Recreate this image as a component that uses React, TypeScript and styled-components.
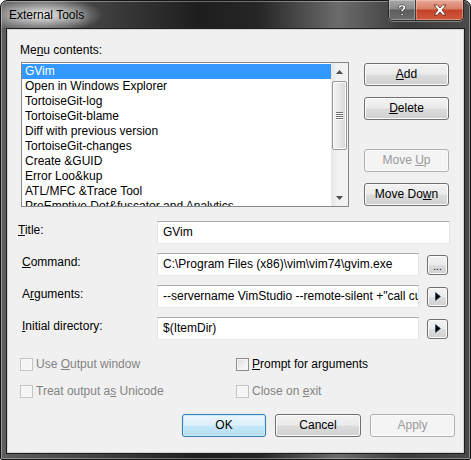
import React from "react";
import styled, { createGlobalStyle, css } from "styled-components";

const Global = createGlobalStyle`
  html, body { margin: 0; padding: 0; background: #ffffff; }
  body { font-family: "Liberation Sans", Arial, sans-serif; font-size: 12px; }
  * { box-sizing: border-box; }
`;

const FONT = `"Liberation Sans", Arial, sans-serif`;

const Window = styled.div`
  width: 471px;
  height: 460px;
  display: flex;
  flex-direction: column;
  padding: 0 6px 6px 6px;
  border: 1px solid #141414;
  border-radius: 7px 7px 2px 2px;
  background:
    radial-gradient(ellipse 60px 18px at 42px 14px, rgba(235, 235, 235, 0.95), rgba(235, 235, 235, 0) 100%),
    linear-gradient(90deg, #5e5e5e 0%, #4a4a4a 15%, #1e1e1e 42%, #262626 55%, #6c6c6c 72%, #3c3c3c 86%, #4a4a4a 100%);
  box-shadow: inset 0 0 0 1px rgba(255, 255, 255, 0.35);
  font-family: ${FONT};
  font-size: 12px;
`;

const TitleBar = styled.div`
  height: 28px;
  display: flex;
  align-items: flex-start;
  justify-content: space-between;
`;

const TitleText = styled.span`
  padding: 7px 0 0 2px;
  color: #000;
  line-height: 15px;
  text-shadow: 0 0 8px rgba(255, 255, 255, 0.9);
`;

const CaptionGroup = styled.div`
  display: flex;
  margin-top: -1px;
  border: 1px solid #2a2a2a;
  border-top: none;
  border-radius: 0 0 5px 5px;
  overflow: hidden;
  box-shadow: 0 1px 0 rgba(255, 255, 255, 0.35);
`;

const CaptionButton = styled.div<{ $kind: "help" | "close" }>`
  height: 20px;
  display: flex;
  align-items: center;
  justify-content: center;
  ${(p) =>
    p.$kind === "help"
      ? css`
          width: 27px;
          background: linear-gradient(#a7a7a7 0%, #8a8a8a 45%, #5c5c5c 50%, #6e6e6e 100%);
          border-right: 1px solid #3a3a3a;
          box-shadow: inset 0 0 0 1px rgba(255, 255, 255, 0.3);
        `
      : css`
          width: 47px;
          background: linear-gradient(#e8a897 0%, #d97e66 45%, #c2412a 50%, #d05a3c 100%);
          box-shadow: inset 0 0 0 1px rgba(255, 220, 210, 0.4);
        `}
`;

const Client = styled.div`
  flex: 1;
  background: #f0f0f0;
  border: 1px solid #d4d4d4;
  box-shadow: 0 0 0 1px #1c1c1c;
  display: flex;
  flex-direction: column;
  padding-top: 13px;
  color: #000;
`;

const SectionLabel = styled.div`
  line-height: 15px;
  padding-left: 12px;
  margin-bottom: 4px;
`;

const TopRow = styled.div`
  display: flex;
  padding-left: 13px;
  gap: 15px;
`;

const ListBox = styled.div`
  width: 328px;
  height: 145px;
  border: 1px solid #828790;
  background: #fff;
  display: flex;
  overflow: hidden;
`;

const ListItems = styled.div`
  flex: 1;
  padding-top: 1px;
  overflow: hidden;
`;

const ListItem = styled.div<{ $selected?: boolean }>`
  height: 15px;
  line-height: 15px;
  padding-left: 3px;
  white-space: nowrap;
  ${(p) =>
    p.$selected &&
    css`
      background: #3399ff;
      color: #fff;
    `}
`;

const ScrollBar = styled.div`
  width: 17px;
  display: flex;
  flex-direction: column;
  background: linear-gradient(90deg, #e6e6e6, #f2f2f2 40%, #f2f2f2);
`;

const ScrollArrow = styled.div`
  height: 17px;
  display: flex;
  align-items: center;
  justify-content: center;
`;

const ScrollTrack = styled.div`
  flex: 1;
  padding: 1px 1px 0 1px;
`;

const ScrollThumb = styled.div`
  height: 69px;
  border: 1px solid #979797;
  border-radius: 2px;
  background: linear-gradient(90deg, #f4f4f4 0%, #e8e8e8 50%, #d6d6d6 100%);
  box-shadow: inset 0 0 0 1px #fbfbfb;
  display: flex;
  flex-direction: column;
  align-items: center;
  justify-content: center;
  gap: 1px;
`;

const Grip = styled.div`
  width: 7px;
  height: 1px;
  background: #6e6e6e;
  box-shadow: 0 1px 0 #ffffff;
`;

const ButtonColumn = styled.div`
  display: flex;
  flex-direction: column;
  width: 85px;
  padding-top: 1px;
`;

type BtnVariant = "normal" | "default" | "disabled";

const Button = styled.button<{ $variant?: BtnVariant; $gap?: number; $w?: number }>`
  width: ${(p) => p.$w ?? 85}px;
  height: 23px;
  margin: ${(p) => p.$gap ?? 0}px 0 0 0;
  padding: 0;
  font-family: ${FONT};
  font-size: 12px;
  line-height: 15px;
  color: #000;
  border-radius: 3px;
  border: 1px solid #707070;
  background: linear-gradient(#f2f2f2 0%, #ebebeb 48%, #dddddd 52%, #cfcfcf 100%);
  box-shadow: inset 0 0 0 1px #fcfcfc;
  ${(p) =>
    p.$variant === "default" &&
    css`
      border-color: #3c7fb1;
      background: linear-gradient(#e9f5fc 0%, #dcf0fb 48%, #c6e7f8 52%, #b4dcf1 100%);
      box-shadow: inset 0 0 0 1px #c4ecfd, 0 0 1px #7fc4ee;
    `}
  ${(p) =>
    p.$variant === "disabled" &&
    css`
      border-color: #adb2b5;
      background: #f4f4f4;
      color: #9a9a9a;
      box-shadow: inset 0 0 0 1px #fafafa;
    `}
`;

const Fields = styled.div`
  margin-top: 14px;
  padding-left: 10px;
  display: flex;
  flex-direction: column;
  gap: 9px;
`;

const FieldRow = styled.div`
  display: flex;
  align-items: center;
  height: 23px;
`;

const FieldLabel = styled.label<{ $indent?: number }>`
  width: 139px;
  padding-left: ${(p) => p.$indent ?? 0}px;
  line-height: 15px;
  margin-top: -4px;
`;

const TextBox = styled.div<{ $w: number }>`
  width: ${(p) => p.$w}px;
  height: 23px;
  background: #fff;
  border: 1px solid #e2e3ea;
  border-top-color: #abadb3;
  border-bottom-color: #e3e9ef;
  padding: 0 3px 0 5px;
  line-height: 21px;
  white-space: nowrap;
  overflow: hidden;
`;

const SmallButton = styled.div`
  width: 21px;
  height: 20px;
  margin-left: 8px;
  border: 1px solid #707070;
  border-radius: 3px;
  background: linear-gradient(#f2f2f2 0%, #ebebeb 48%, #dddddd 52%, #cfcfcf 100%);
  box-shadow: inset 0 0 0 1px #fcfcfc;
  display: flex;
  align-items: center;
  justify-content: center;
`;

const Dots = styled.span`
  font-size: 10px;
  line-height: 10px;
  margin-top: 4px;
  letter-spacing: 0;
  color: #000;
`;

const Checks = styled.div`
  margin-top: 18px;
  padding-left: 12px;
  display: grid;
  grid-template-columns: 216px 1fr;
  grid-auto-rows: 13px;
  row-gap: 14px;
`;

const CheckItem = styled.div<{ $disabled?: boolean }>`
  display: flex;
  align-items: center;
  gap: 3px;
  color: ${(p) => (p.$disabled ? "#838383" : "#000")};
  line-height: 15px;
  white-space: nowrap;
`;

const CheckBox = styled.span<{ $disabled?: boolean }>`
  width: 13px;
  height: 13px;
  flex: none;
  border: 1px solid ${(p) => (p.$disabled ? "#c4c4c4" : "#8e8f8f")};
  background: ${(p) =>
    p.$disabled ? "#f4f4f4" : "linear-gradient(135deg, #dcdcdc 0%, #f2f2f2 60%, #ffffff 100%)"};
  box-shadow: inset 0 0 0 1px ${(p) => (p.$disabled ? "#f8f8f8" : "#f4f4f4")};
`;

const Footer = styled.div`
  margin-top: 16px;
  padding-right: 8px;
  display: flex;
  justify-content: flex-end;
  gap: 9px;
`;

const U = styled.u`
  text-decoration: underline;
  text-underline-offset: 1px;
`;

const items = [
  "GVim",
  "Open in Windows Explorer",
  "TortoiseGit-log",
  "TortoiseGit-blame",
  "Diff with previous version",
  "TortoiseGit-changes",
  "Create &GUID",
  "Error Loo&kup",
  "ATL/MFC &Trace Tool",
  "PreEmptive Dot&fuscator and Analytics",
];

const Arrow = ({ dir }: { dir: "up" | "down" }) => (
  <svg width="7" height="4" viewBox="0 0 7 4">
    {dir === "up" ? (
      <polygon points="3.5,0 7,4 0,4" fill="#505050" />
    ) : (
      <polygon points="0,0 7,0 3.5,4" fill="#505050" />
    )}
  </svg>
);

const PlayIcon = () => (
  <svg width="6" height="9" viewBox="0 0 6 9">
    <polygon points="0.5,0.5 5.5,4.5 0.5,8.5" fill="#000" stroke="#1a3a6a" strokeWidth="0.6" />
  </svg>
);

const HelpGlyph = () => (
  <svg width="10" height="13" viewBox="0 0 10 13">
    <path
      d="M1.3 4 C1.3 1.6 3 0.8 5 0.8 C7.2 0.8 8.6 2 8.6 3.6 C8.6 5.6 6.1 5.8 6.1 7.8 L3.9 7.8 C3.9 5.2 6.2 4.9 6.2 3.7 C6.2 3 5.7 2.6 5 2.6 C4.2 2.6 3.7 3.1 3.7 4 Z"
      fill="#fff"
      stroke="#333"
      strokeWidth="0.7"
    />
    <rect x="3.9" y="9.3" width="2.3" height="2.3" fill="#fff" stroke="#333" strokeWidth="0.7" />
  </svg>
);

const CloseGlyph = () => (
  <svg width="14" height="12" viewBox="0 0 14 12">
    <path
      d="M1 1 L4.5 1 L7 4 L9.5 1 L13 1 L9 6 L13 11 L9.5 11 L7 8 L4.5 11 L1 11 L5 6 Z"
      fill="#fff"
      stroke="#5a1e12"
      strokeWidth="0.8"
      strokeLinejoin="round"
    />
  </svg>
);

export default function App() {
  return (
    <>
      <Global />
      <Window>
        <TitleBar>
          <TitleText>External Tools</TitleText>
          <CaptionGroup>
            <CaptionButton $kind="help">
              <HelpGlyph />
            </CaptionButton>
            <CaptionButton $kind="close">
              <CloseGlyph />
            </CaptionButton>
          </CaptionGroup>
        </TitleBar>
        <Client>
          <SectionLabel>
            Me<U>n</U>u contents:
          </SectionLabel>
          <TopRow>
            <ListBox>
              <ListItems>
                {items.map((t, i) => (
                  <ListItem key={t} $selected={i === 0}>
                    {t}
                  </ListItem>
                ))}
              </ListItems>
              <ScrollBar>
                <ScrollArrow>
                  <Arrow dir="up" />
                </ScrollArrow>
                <ScrollTrack>
                  <ScrollThumb>
                    <Grip />
                    <Grip />
                    <Grip />
                    <Grip />
                  </ScrollThumb>
                </ScrollTrack>
                <ScrollArrow>
                  <Arrow dir="down" />
                </ScrollArrow>
              </ScrollBar>
            </ListBox>
            <ButtonColumn>
              <Button>
                <U>A</U>dd
              </Button>
              <Button $gap={11}>
                <U>D</U>elete
              </Button>
              <Button $gap={29} $variant="disabled">
                Move <U>U</U>p
              </Button>
              <Button $gap={11}>
                Move Do<U>w</U>n
              </Button>
            </ButtonColumn>
          </TopRow>
          <Fields>
            <FieldRow>
              <FieldLabel>
                <U>T</U>itle:
              </FieldLabel>
              <TextBox $w={293}>GVim</TextBox>
            </FieldRow>
            <FieldRow>
              <FieldLabel $indent={4}>
                <U>C</U>ommand:
              </FieldLabel>
              <TextBox $w={262}>C:\Program Files (x86)\vim\vim74\gvim.exe</TextBox>
              <SmallButton>
                <Dots>...</Dots>
              </SmallButton>
            </FieldRow>
            <FieldRow>
              <FieldLabel $indent={4}>
                A<U>r</U>guments:
              </FieldLabel>
              <TextBox $w={262}>
                --servername VimStudio --remote-silent +"call cursor($(CurLine), $(CurCol))" $(ItemFileName)$(ItemExt)
              </TextBox>
              <SmallButton>
                <PlayIcon />
              </SmallButton>
            </FieldRow>
            <FieldRow>
              <FieldLabel $indent={4}>
                <U>I</U>nitial directory:
              </FieldLabel>
              <TextBox $w={262}>$(ItemDir)</TextBox>
              <SmallButton>
                <PlayIcon />
              </SmallButton>
            </FieldRow>
          </Fields>
          <Checks>
            <CheckItem $disabled>
              <CheckBox $disabled />
              <span>
                Use <U>O</U>utput window
              </span>
            </CheckItem>
            <CheckItem>
              <CheckBox />
              <span>
                <U>P</U>rompt for arguments
              </span>
            </CheckItem>
            <CheckItem $disabled>
              <CheckBox $disabled />
              <span>
                Treat output a<U>s</U> Unicode
              </span>
            </CheckItem>
            <CheckItem $disabled>
              <CheckBox $disabled />
              <span>
                Close on <U>e</U>xit
              </span>
            </CheckItem>
          </Checks>
          <Footer>
            <Button $variant="default" $w={84}>
              OK
            </Button>
            <Button $w={86}>Cancel</Button>
            <Button $variant="disabled">Apply</Button>
          </Footer>
        </Client>
      </Window>
    </>
  );
}
